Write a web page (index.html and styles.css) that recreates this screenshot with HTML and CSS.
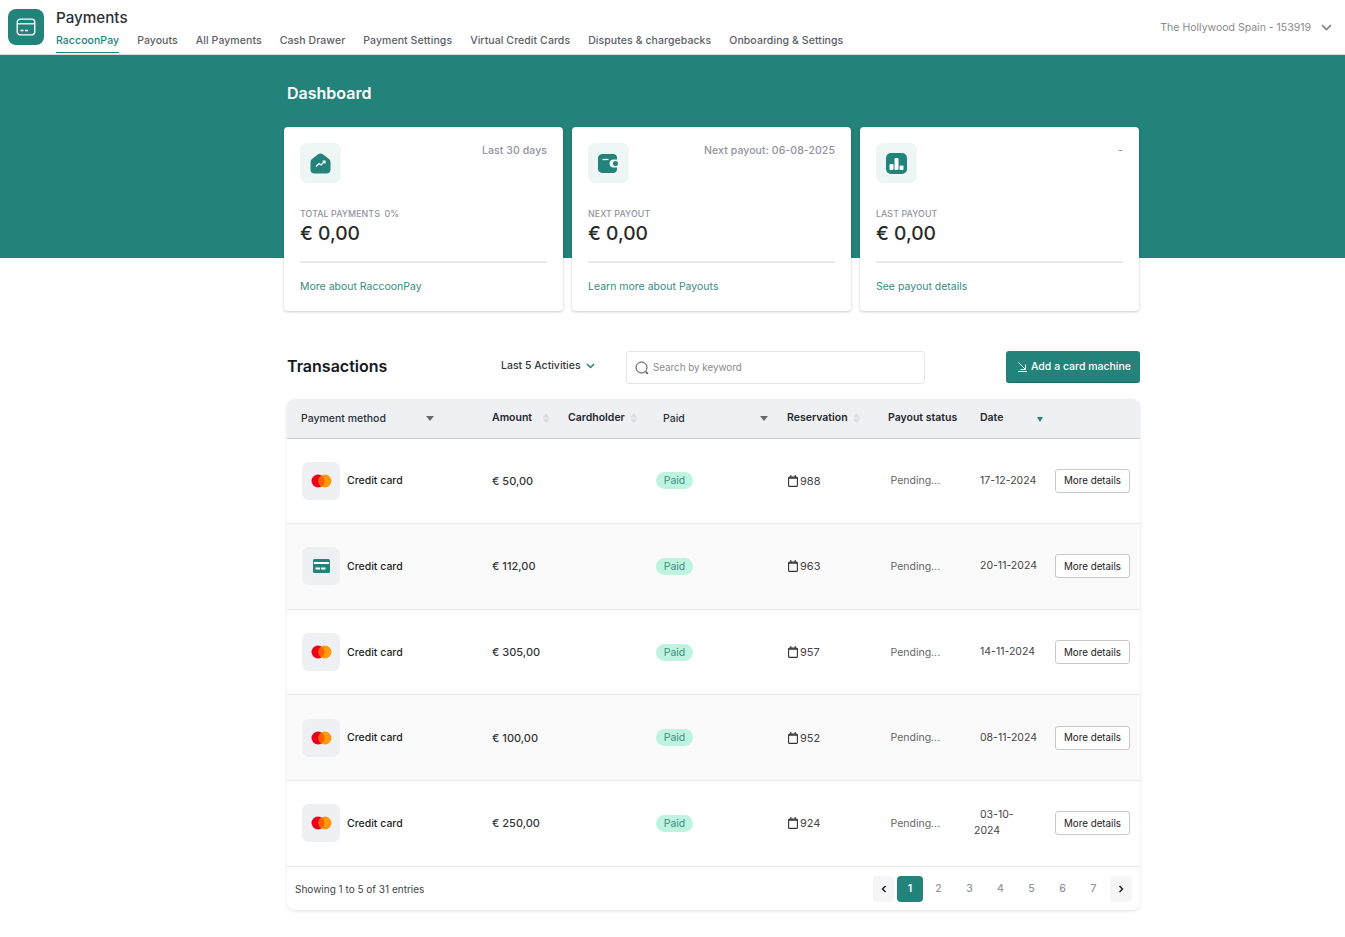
FILE: index.html
```html
<!DOCTYPE html>
<html lang="en">
<head>
<meta charset="utf-8">
<title>Payments</title>
<link rel="stylesheet" href="styles.css">
</head>
<body>
<header class="topbar">
  <div class="app-icon">
    <svg width="20" height="18" viewBox="0 0 20 18" fill="none" stroke="#fff" stroke-width="1.3"><rect x="1.2" y="1.2" width="17.6" height="15.6" rx="3"/><path d="M1.2 5.8h17.6"/><path d="M4.5 12.5h3M9 12.5h3"/></svg>
  </div>
  <div class="app-titles">
    <div class="app-name">Payments</div>
    <nav class="tabs">
      <a class="tab active">RaccoonPay</a>
      <a class="tab">Payouts</a>
      <a class="tab">All Payments</a>
      <a class="tab">Cash Drawer</a>
      <a class="tab">Payment Settings</a>
      <a class="tab">Virtual Credit Cards</a>
      <a class="tab">Disputes &amp; chargebacks</a>
      <a class="tab">Onboarding &amp; Settings</a>
    </nav>
  </div>
  <div class="venue">
    <span>The Hollywood Spain - 153919</span>
    <svg width="11" height="7" viewBox="0 0 11 7" fill="none" stroke="#808080" stroke-width="1.7"><path d="M1 1l4.5 4.5L10 1"/></svg>
  </div>
</header>

<main class="main">
  <section class="hero">
    <h1 class="hero-title">Dashboard</h1>
    <div class="cards">
      <article class="card">
        <div class="card-top">
          <div class="card-icon">
            <svg width="21" height="21" viewBox="0 0 21 21"><path d="M10.5 0.5c1 0 1.8.5 2.6 1.1l5.6 4.1c1.2.9 1.8 1.9 1.8 3.3v7.5c0 2.5-1.5 4-4 4H4.500c-2.500 0-4-1.500-4-4V9c0-1.400.6-2.400 1.800-3.300l5.600-4.100c.8-.6 1.600-1.100 2.600-1.100z" fill="#23827a"/><path d="M6 13.500l3-3 2 1.500 3.500-3.500M12.500 8h2.500v2.500" fill="none" stroke="#fff" stroke-width="1.200"/></svg>
          </div>
          <span class="card-meta">Last 30 days</span>
        </div>
        <div class="card-label">TOTAL PAYMENTS <span class="card-pct">0%</span></div>
        <div class="card-value">€ 0,00</div>
        <a class="card-link">More about RaccoonPay</a>
      </article>
      <article class="card">
        <div class="card-top">
          <div class="card-icon">
            <svg width="21" height="19" viewBox="0 0 21 19"><path d="M5 0h10c2.500 0 4 1.500 4 4v1.500h-3.500a4 4 0 0 0 0 8H19V15c0 2.500-1.500 4-4 4H5c-2.500 0-5-1.500-5-4V4c0-2.500 2.500-4 5-4z" fill="#23827a"/><circle cx="17.500" cy="9.500" r="2.500" fill="#23827a"/><path d="M4.500 5.500h6" stroke="#fff" stroke-width="1.300"/></svg>
          </div>
          <span class="card-meta">Next payout: 06-08-2025</span>
        </div>
        <div class="card-label">NEXT PAYOUT</div>
        <div class="card-value">€ 0,00</div>
        <a class="card-link">Learn more about Payouts</a>
      </article>
      <article class="card">
        <div class="card-top">
          <div class="card-icon">
            <svg width="21" height="21" viewBox="0 0 21 21"><rect width="21" height="21" rx="5" fill="#23827a"/><rect x="3.500" y="11" width="4" height="6" rx="1" fill="#fff"/><rect x="8.500" y="5" width="4" height="12" rx="1" fill="#fff"/><rect x="13.500" y="12.500" width="4" height="4.500" rx="1" fill="#fff"/></svg>
          </div>
          <span class="card-meta">-</span>
        </div>
        <div class="card-label">LAST PAYOUT</div>
        <div class="card-value">€ 0,00</div>
        <a class="card-link">See payout details</a>
      </article>
    </div>
  </section>

  <section class="transactions">
    <div class="tx-bar">
      <h2 class="tx-title">Transactions</h2>
      <div class="tx-filter">
        <span>Last 5 Activities</span>
        <svg width="9" height="6" viewBox="0 0 9 6" fill="none" stroke="#23827a" stroke-width="1.500"><path d="M1 1l3.500 3.500L8 1"/></svg>
      </div>
      <div class="tx-search">
        <svg width="14" height="14" viewBox="0 0 14 14" fill="none" stroke="#444" stroke-width="1"><circle cx="6.500" cy="6.500" r="5.500"/><path d="M10.800 10.800l2 2" stroke-width="1.500"/></svg>
        <span>Search by keyword</span>
      </div>
      <button class="tx-add">
        <svg width="11" height="11" viewBox="0 0 11 11" fill="none" stroke="#fff" stroke-width="0.900"><path d="M1.500 1.500l7 7M8.500 3.500v5h-5M1 10.500h9"/></svg>
        <span>Add a card machine</span>
      </button>
    </div>

    <div class="table">
      <div class="thead">
        <div class="th th-method"><span>Payment method</span><i class="caret"></i></div>
        <div class="th th-amount"><b>Amount</b><i class="updown"></i></div>
        <div class="th th-holder"><b>Cardholder</b><i class="updown"></i></div>
        <div class="th th-paid"><span>Paid</span><i class="caret"></i></div>
        <div class="th th-res"><b>Reservation</b><i class="updown"></i></div>
        <div class="th th-status"><b>Payout status</b></div>
        <div class="th th-date"><b>Date</b><i class="caret teal"></i></div>
      </div>

      <div class="row">
        <div class="c-method"><span class="pm"><svg class="mc" width="21" height="14" viewBox="0 0 21 14"><circle cx="7" cy="7" r="6.500" fill="#eb001b"/><circle cx="14" cy="7" r="6.500" fill="#ff9a0a"/><path d="M10.500 1.500a6.500 6.500 0 0 1 0 11a6.500 6.500 0 0 1 0-11z" fill="#ff5f00"/></svg></span><span class="pm-name">Credit card</span></div>
        <div class="c-amount">€ 50,00</div>
        <div></div>
        <div><span class="pill">Paid</span></div>
        <div class="c-res"><svg width="10" height="12" viewBox="0 0 10 12" fill="none" stroke="#333" stroke-width="1.100"><rect x="0.600" y="2" width="8.800" height="9.400" rx="1"/><path d="M0.600 3h8.800" stroke-width="1.500"/><path d="M2.800 0v2.500M7.200 0v2.500"/></svg>988</div>
        <div class="c-status">Pending...</div>
        <div class="c-date">17-12-2024</div>
        <div><button class="more">More details</button></div>
      </div>
      <div class="row alt">
        <div class="c-method"><span class="pm"><svg width="17" height="14" viewBox="0 0 17 14"><rect width="17" height="14" rx="1.500" fill="#23827a"/><rect x="0.800" y="3" width="15.400" height="2" fill="#fff"/><rect x="2.500" y="8.500" width="4.500" height="2" fill="#fff"/><rect x="8" y="8.500" width="4.500" height="2" fill="#fff"/></svg></span><span class="pm-name">Credit card</span></div>
        <div class="c-amount">€ 112,00</div>
        <div></div>
        <div><span class="pill">Paid</span></div>
        <div class="c-res"><svg width="10" height="12" viewBox="0 0 10 12" fill="none" stroke="#333" stroke-width="1.100"><rect x="0.600" y="2" width="8.800" height="9.400" rx="1"/><path d="M0.600 3h8.800" stroke-width="1.500"/><path d="M2.800 0v2.500M7.200 0v2.500"/></svg>963</div>
        <div class="c-status">Pending...</div>
        <div class="c-date">20-11-2024</div>
        <div><button class="more">More details</button></div>
      </div>
      <div class="row">
        <div class="c-method"><span class="pm"><svg class="mc" width="21" height="14" viewBox="0 0 21 14"><circle cx="7" cy="7" r="6.500" fill="#eb001b"/><circle cx="14" cy="7" r="6.500" fill="#ff9a0a"/><path d="M10.500 1.500a6.500 6.500 0 0 1 0 11a6.500 6.500 0 0 1 0-11z" fill="#ff5f00"/></svg></span><span class="pm-name">Credit card</span></div>
        <div class="c-amount">€ 305,00</div>
        <div></div>
        <div><span class="pill">Paid</span></div>
        <div class="c-res"><svg width="10" height="12" viewBox="0 0 10 12" fill="none" stroke="#333" stroke-width="1.100"><rect x="0.600" y="2" width="8.800" height="9.400" rx="1"/><path d="M0.600 3h8.800" stroke-width="1.500"/><path d="M2.800 0v2.500M7.200 0v2.500"/></svg>957</div>
        <div class="c-status">Pending...</div>
        <div class="c-date">14-11-2024</div>
        <div><button class="more">More details</button></div>
      </div>
      <div class="row alt">
        <div class="c-method"><span class="pm"><svg class="mc" width="21" height="14" viewBox="0 0 21 14"><circle cx="7" cy="7" r="6.500" fill="#eb001b"/><circle cx="14" cy="7" r="6.500" fill="#ff9a0a"/><path d="M10.500 1.500a6.500 6.500 0 0 1 0 11a6.500 6.500 0 0 1 0-11z" fill="#ff5f00"/></svg></span><span class="pm-name">Credit card</span></div>
        <div class="c-amount">€ 100,00</div>
        <div></div>
        <div><span class="pill">Paid</span></div>
        <div class="c-res"><svg width="10" height="12" viewBox="0 0 10 12" fill="none" stroke="#333" stroke-width="1.100"><rect x="0.600" y="2" width="8.800" height="9.400" rx="1"/><path d="M0.600 3h8.800" stroke-width="1.500"/><path d="M2.800 0v2.500M7.200 0v2.500"/></svg>952</div>
        <div class="c-status">Pending...</div>
        <div class="c-date">08-11-2024</div>
        <div><button class="more">More details</button></div>
      </div>
      <div class="row">
        <div class="c-method"><span class="pm"><svg class="mc" width="21" height="14" viewBox="0 0 21 14"><circle cx="7" cy="7" r="6.500" fill="#eb001b"/><circle cx="14" cy="7" r="6.500" fill="#ff9a0a"/><path d="M10.500 1.500a6.500 6.500 0 0 1 0 11a6.500 6.500 0 0 1 0-11z" fill="#ff5f00"/></svg></span><span class="pm-name">Credit card</span></div>
        <div class="c-amount">€ 250,00</div>
        <div></div>
        <div><span class="pill">Paid</span></div>
        <div class="c-res"><svg width="10" height="12" viewBox="0 0 10 12" fill="none" stroke="#333" stroke-width="1.100"><rect x="0.600" y="2" width="8.800" height="9.400" rx="1"/><path d="M0.600 3h8.800" stroke-width="1.500"/><path d="M2.800 0v2.500M7.200 0v2.500"/></svg>924</div>
        <div class="c-status">Pending...</div>
        <div class="c-date">03-10-<br>2024</div>
        <div><button class="more">More details</button></div>
      </div>

      <div class="tfoot">
        <span class="entries">Showing 1 to 5 of 31 entries</span>
        <div class="pager">
          <button class="pg-arrow prev"><svg width="6" height="8" viewBox="0 0 6 8" fill="none" stroke="#222" stroke-width="1.500"><path d="M4.500 1L1.500 4l3 3"/></svg></button>
          <span class="pg-num current">1</span>
          <span class="pg-num">2</span>
          <span class="pg-num">3</span>
          <span class="pg-num">4</span>
          <span class="pg-num">5</span>
          <span class="pg-num">6</span>
          <span class="pg-num">7</span>
          <button class="pg-arrow next"><svg width="6" height="8" viewBox="0 0 6 8" fill="none" stroke="#222" stroke-width="1.500"><path d="M1.500 1l3 3-3 3"/></svg></button>
        </div>
      </div>
    </div>
  </section>
</main>
</body>
</html>
```

FILE: styles.css
```css
* { box-sizing: border-box; }
html, body { margin: 0; padding: 0; background: #fff; }
body { font-family: Inter, "Liberation Sans", sans-serif; color: #222; overflow-x: hidden; }

.topbar { height: 55px; display: flex; align-items: flex-start; border-bottom: 1px solid #dcdcdc; padding: 9px 13px 0 8px; }
.app-icon { width: 36px; height: 36px; border-radius: 8px; background: #23827a; display: flex; align-items: center; justify-content: center; }
.app-titles { margin-left: 12px; display: flex; flex-direction: column; }
.app-name { font-size: 15.200px; font-weight: 500; line-height: 18px; color: #2b2f36; }
.tabs { display: flex; gap: 18px; margin-top: 6px; }
.tab { font-size: 10.500px; font-weight: 500; line-height: 13px; height: 21px; color: #5c6066; padding-top: 1px; letter-spacing: 0.075px; }
.tab.active { color: #23827a; border-bottom: 1px solid #23827a; height: 20px; }
.venue { margin-left: auto; margin-top: 12px; display: flex; align-items: center; gap: 10px; font-size: 10.500px; color: #8a8a8a; line-height: 13px; }

.hero { padding: 0 0 0 284px; background: linear-gradient(#23827a 203px, #fff 203px); }
.hero-title { margin: 0; padding: 28px 0 0 3px; height: 72px; font-size: 16px; font-weight: 600; line-height: 20px; color: #fff; }
.cards { display: flex; gap: 9px; }
.card { width: 279px; height: 184px; background: #fff; border-radius: 4px; box-shadow: 0 1px 3px rgba(30,40,60,.25); padding: 16px 16px 0; display: flex; flex-direction: column; }
.card-top { display: flex; justify-content: space-between; height: 40px; }
.card-icon { width: 41px; height: 40px; background: #edf6f5; border-radius: 7px; display: flex; align-items: center; justify-content: center; }
.card-meta { font-size: 10.500px; font-weight: 500; color: #8f939f; line-height: 14px; padding-top: 1px; letter-spacing: 0.080px; }
.card-label { margin-top: 25px; font-size: 8.800px; font-weight: 500; line-height: 11px; color: #8f939f; letter-spacing: 0.100px; }
.card-pct { margin-left: 2px; }
.card-value { font-size: 19.200px; font-weight: 500; line-height: 26px; color: #2b2b2b; border-bottom: 2px solid #e8e8ee; box-sizing: content-box; height: 26px; padding: 1px 0 15px; }
.card-link { margin-top: 17px; font-size: 10.500px; line-height: 14px; color: #3a8a81; }

.transactions { padding: 40px 0 27px 287px; }
.tx-bar { width: 853px; height: 33px; display: flex; align-items: flex-start; }
.tx-title { margin: 5px 0 0; width: 214px; font-size: 16px; font-weight: 600; line-height: 20px; color: #15181c; }
.tx-filter { width: 125px; display: flex; align-items: center; gap: 5px; font-size: 10.500px; font-weight: 500; color: #33363b; margin-top: 8px; }
.tx-search { width: 299px; height: 33px; border: 1px solid #e6e6ea; border-radius: 3px; display: flex; align-items: center; gap: 4px; padding-left: 8px; font-size: 9.800px; color: #8a8a8a; }
.tx-add { margin-left: 81px; width: 134px; height: 32px; background: #23827a; border: 0; border-bottom: 1px solid #1a6a63; border-radius: 3px; color: #fff; font: 500 10.500px Inter, "Liberation Sans", sans-serif; display: flex; align-items: center; gap: 3px; padding: 0 0 0 11px; }

.table { margin-top: 15px; width: 853px; border-radius: 8px; box-shadow: 0 1px 3px rgba(30,40,60,.15); }
.thead { height: 39.600px; background: #eef0f4; border-bottom: 1px solid #cdced2; border-radius: 8px 8px 0 0; display: grid; grid-template-columns: 205px 76px 95px 124px 101px 92px 160px; align-items: center; font-size: 10.500px; }
.th { display: flex; align-items: center; color: #2b2f36; font-weight: 500; }
.th b { font-weight: 600; margin-top: -2px; color: #25282d; }
.th-method { padding-left: 14px; }
.th-method .caret { margin-left: 40px; }
.th-amount .updown { margin-left: 11px; }
.th-holder .updown { margin-left: 6px; }
.th-paid .caret { margin-left: 75px; }
.th-res .updown { margin-left: 6px; }
.th-date .caret { margin-left: 34px; margin-top: 3px; }
.caret { display: inline-block; width: 0; height: 0; border-left: 4.500px solid transparent; border-right: 4.500px solid transparent; border-top: 5px solid #666a70; }
.caret.teal { border-left-width: 3px; border-right-width: 3px; border-top-color: #23827a; }
.updown { display: inline-block; width: 6px; height: 10px; background: #dcdde1; clip-path: polygon(50% 0, 100% 35%, 100% 45%, 0 45%, 0 35%, 50% 0, 50% 0, 0 55%, 100% 55%, 100% 65%, 50% 100%, 0 65%, 0 55%); }

.row { height: 85.600px; display: grid; grid-template-columns: 205px 76px 88px 131px 101px 86px 81px 85px; align-items: center; border-bottom: 1px solid #e9e9ec; background: #fff; font-size: 10.500px; }
.row.alt { background: #fafafa; }
.c-method { display: flex; align-items: center; padding-left: 15px; gap: 7px; }
.pm { width: 38px; height: 38px; background: #eef0f4; border-radius: 7px; display: flex; align-items: center; justify-content: center; }
.pm-name { font-weight: 500; color: #1c1f24; }
.c-amount { font-weight: 500; font-size: 11px; color: #33363b; }
.pill { display: inline-block; width: 37px; height: 17px; line-height: 17px; border-radius: 9px; background: #bdf3df; color: #418f7f; font-size: 10.500px; text-align: center; }
.c-res { display: flex; align-items: center; gap: 2px; padding-left: 1px; color: #444; font-size: 11px; }
.c-status { padding-left: 2.500px; color: #666; font-size: 10.500px; }
.c-date { color: #444; text-indent: 6px; line-height: 16px; font-size: 10.500px; }
.more { width: 75px; height: 24px; background: #fff; border: 1px solid #c8c8cc; border-radius: 3px; font: 400 9.800px Inter, "Liberation Sans", sans-serif; color: #222; padding: 0; }

.tfoot { height: 43.300px; display: flex; align-items: center; justify-content: space-between; padding: 1.500px 8px 0 8px; background: #fff; border-radius: 0 0 8px 8px; }
.entries { font-size: 10px; color: #444; }
.pager { display: flex; align-items: center; }
.pg-arrow { width: 21px; height: 26px; background: #f5f5f8; border: 0; border-radius: 4px; padding: 0; display: flex; align-items: center; justify-content: center; }
.pg-num { width: 31px; height: 26px; text-align: center; line-height: 25px; font-size: 10.500px; font-weight: 500; color: #949494; }
.pg-num.current { width: 26px; margin: 0 0 0 3px; border-radius: 4px; background: #23827a; color: #fff; font-weight: 600; }
.pg-arrow.next { width: 22px; margin-left: 1px; }
```
